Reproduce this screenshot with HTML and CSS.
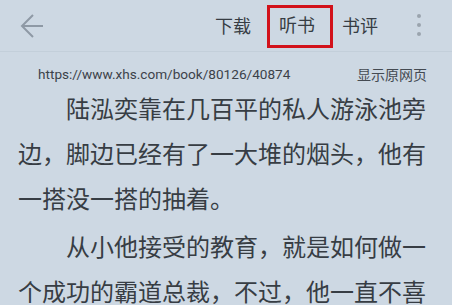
FILE: index.html
```html
<!DOCTYPE html>
<html lang="zh">
<head>
<meta charset="utf-8">
<link rel="stylesheet" href="styles.css">
</head>
<body>
<div class="page">
  <header class="topbar">
    <svg class="back" width="24" height="26" viewBox="0 0 24 26">
      <path d="M23 13 H2 M13 2 L2 13 L13 24" fill="none" stroke="#8e99a5" stroke-width="2"/>
    </svg>
    <div class="spacer"></div>
    <nav class="menu">
      <span class="item dl">下载</span>
      <span class="item listen">听书</span>
      <span class="item review">书评</span>
      <span class="more"><i></i><i></i><i></i></span>
    </nav>
  </header>
  <div class="source">
    <span class="url">https://www.xhs.com/book/80126/40874</span>
    <span class="orig">显示原网页</span>
  </div>
  <article class="text">
    <p>陆泓奕靠在几百平的私人游泳池旁边，脚边已经有了一大堆的烟头，他有一搭没一搭的抽着。</p>
    <p>从小他接受的教育，就是如何做一个成功的霸道总裁，不过，他一直不喜欢</p>
  </article>
</div>
</body>
</html>
```
FILE: styles.css
```css
html, body {
  margin: 0;
  padding: 0;
  background: #cdd8e3;
}
.page {
  width: 452px;
  height: 305px;
  overflow: hidden;
  background: #cdd8e3;
  font-family: "Noto Sans CJK SC", "Noto Sans", sans-serif;
  color: #373d44;
}
.topbar {
  height: 51px;
  border-bottom: 1px solid #c3cfda;
  display: flex;
  align-items: center;
}
.back {
  margin-left: 20px;
  display: block;
}
.spacer {
  flex: 1;
}
.menu {
  display: flex;
  align-items: center;
  font-size: 18px;
  line-height: 25px;
  margin-right: 31px;
}
.item {
  display: block;
}
.listen {
  margin-left: 16px;
  border: 3px solid #d2121b;
  padding: 4px 15px 8px 9px;
  margin-top: 2px;
}
.review {
  margin-left: 9px;
}
.more {
  margin-left: 39px;
  display: flex;
  flex-direction: column;
  gap: 5px;
  margin-top: -1px;
}
.more i {
  display: block;
  width: 4px;
  height: 4px;
  border-radius: 50%;
  background: #9aa4ae;
}
.source {
  display: flex;
  justify-content: space-between;
  align-items: center;
  padding: 12px 25px 0 38px;
  height: 20px;
  line-height: 20px;
}
.url {
  font-family: Roboto, "Noto Sans", sans-serif;
  font-size: 13.6px;
  color: #3c424a;
}
.orig {
  font-size: 14px;
  color: #444a52;
}
.text {
  padding: 1px 20px 0 18px;
}
.text p {
  margin: 0 0 3px;
  font-size: 24px;
  line-height: 45px;
  text-indent: 48px;
}
```
